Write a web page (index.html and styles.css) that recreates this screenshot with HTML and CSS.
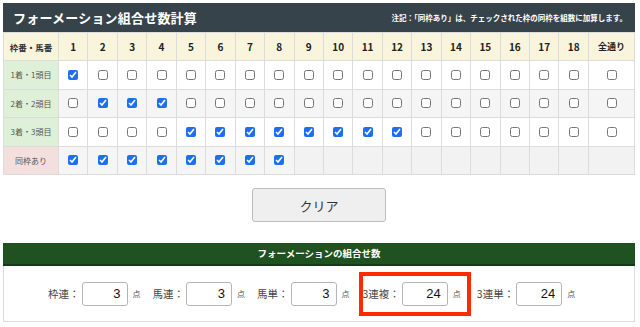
FILE: index.html
```html
<!DOCTYPE html>
<html lang="ja">
<head>
    <meta charset="UTF-8" />
    <title>フォーメーション組合せ数計算</title>
    <link rel="stylesheet" href="styles.css">
</head>
<body>
    <section class="calc">
        <div class="calc-title">
            <h2>フォーメーション組合せ数計算</h2>
            <p class="note">注記：「同枠あり」は、チェックされた枠の同枠を組数に加算します。</p>
        </div>
        <table class="grid">
            <thead>
                <tr>
                    <th class="head-label">枠番・馬番</th>
                    <th>1</th><th>2</th><th>3</th><th>4</th><th>5</th><th>6</th>
                    <th>7</th><th>8</th><th>9</th><th>10</th><th>11</th><th>12</th>
                    <th>13</th><th>14</th><th>15</th><th>16</th><th>17</th><th>18</th>
                    <th class="all">全通り</th>
                </tr>
            </thead>
            <tbody id="rows"></tbody>
        </table>

        <div class="actions">
            <button type="button" id="clearBtn">クリア</button>
        </div>

        <div class="result">
            <h3 class="result-title">フォーメーションの組合せ数</h3>
            <div class="result-body">
                <div class="item"><span class="lbl">枠連：</span><input type="text" value="3" readonly /><span class="pt">点</span></div>
                <div class="item"><span class="lbl">馬連：</span><input type="text" value="3" readonly /><span class="pt">点</span></div>
                <div class="item"><span class="lbl">馬単：</span><input type="text" value="3" readonly /><span class="pt">点</span></div>
                <div class="item hl"><span class="lbl">3連複：</span><input type="text" value="24" readonly /><span class="pt">点</span></div>
                <div class="item"><span class="lbl">3連単：</span><input type="text" value="24" readonly /><span class="pt">点</span></div>
            </div>
        </div>
    </section>

    <script>
        const rows = [
            { label: '1着・1頭目', cls: 'green', checked: [1] },
            { label: '2着・2頭目', cls: 'green', checked: [2, 3, 4], alt: true },
            { label: '3着・3頭目', cls: 'green', checked: [5, 6, 7, 8, 9, 10, 11, 12] },
            { label: '同枠あり', cls: 'pink', checked: [1, 2, 3, 4, 5, 6, 7, 8], alt: true, short: true }
        ];
        const tbody = document.getElementById('rows');
        rows.forEach(r => {
            const tr = document.createElement('tr');
            if (r.alt) tr.className = 'alt';
            let html = '<th class="row-label ' + r.cls + '">' + r.label + '</th>';
            for (let i = 1; i <= 19; i++) {
                if (r.short && i > 8) {
                    html += '<td class="empty"></td>';
                    continue;
                }
                const on = r.checked.includes(i) ? ' checked' : '';
                html += '<td><input type="checkbox"' + on + ' /></td>';
            }
            tr.innerHTML = html;
            tbody.appendChild(tr);
        });

        document.getElementById('clearBtn').addEventListener('click', () => {
            document.querySelectorAll('.grid input[type=checkbox]').forEach(c => c.checked = false);
        });
    </script>
</body>
</html>
```

FILE: styles.css
```css
* {
    margin: 0;
    padding: 0;
    box-sizing: border-box;
}
body {
    font-family: "Noto Sans CJK JP", "Noto Sans", sans-serif;
    background: #fff;
    color: #333;
    padding: 3px 5px 0 3px;
}
.calc {
    width: 632px;
}
.calc-title {
    display: flex;
    align-items: center;
    justify-content: space-between;
    height: 29px;
    padding: 0 8px 0 10px;
    background: #37434b;
    color: #fff;
}
.calc-title h2 {
    font-size: 13px;
    font-weight: 700;
    letter-spacing: 0.2px;
}
.note {
    font-size: 7.5px;
    font-weight: 700;
}
.grid {
    width: 100%;
    border-collapse: collapse;
    table-layout: fixed;
}
.grid th,
.grid td {
    border: 1px solid #dcdcdc;
    text-align: center;
    vertical-align: middle;
}
.grid thead th {
    height: 28px;
    background: #f9f5dd;
    font-size: 10px;
    font-weight: 700;
    color: #222;
}
.grid thead th.head-label {
    width: 55px;
    font-size: 8.5px;
    color: #333;
}
.grid thead th.all {
    width: 46px;
    font-size: 9px;
}
.grid tbody tr {
    height: 28.5px;
}
.grid tbody tr.alt td {
    background: #f5f5f5;
}
.row-label {
    font-size: 8px;
    font-weight: 400;
    color: #555;
}
.row-label.green {
    background: #dff0d8;
}
.row-label.pink {
    background: #f4dfdf;
}
.grid td.empty,
.grid tr.alt td.empty {
    background: #f2f2f2;
}
.grid input[type=checkbox] {
    width: 10px;
    height: 10px;
    accent-color: #1d6ff2;
    display: block;
    margin: 0 auto;
}
.actions {
    display: flex;
    justify-content: center;
    padding: 13px 0 21px 0;
}
.actions button {
    width: 134px;
    height: 34px;
    background: #efefef;
    border: 1px solid #bdbdbd;
    border-radius: 3px;
    font-family: inherit;
    font-size: 13px;
    color: #333;
}
.result-title {
    height: 23px;
    line-height: 21px;
    background: #1f5121;
    border-bottom: 2px solid #163a17;
    color: #fff;
    text-align: center;
    font-size: 9.5px;
    font-weight: 700;
}
.result-body {
    display: flex;
    align-items: center;
    gap: 12px;
    height: 56px;
    border: 1px solid #dcdcdc;
    border-top: none;
    padding-left: 44px;
}
.item {
    display: flex;
    align-items: center;
}
.item .lbl {
    font-size: 10.5px;
    color: #444;
    margin-right: 2px;
}
.item input {
    width: 46px;
    height: 24px;
    border: 1px solid #b5b5b5;
    border-radius: 3px;
    font-family: "Liberation Sans", sans-serif;
    font-size: 13px;
    text-align: right;
    padding-right: 6px;
    color: #111;
}
.item .pt {
    font-size: 8px;
    color: #555;
    margin-left: 5px;
}
.item.hl {
    border: 4px solid #ff2a00;
    padding: 6px 6px 6px 0;
    margin: 0 -6px 0 -3px;
}
```
